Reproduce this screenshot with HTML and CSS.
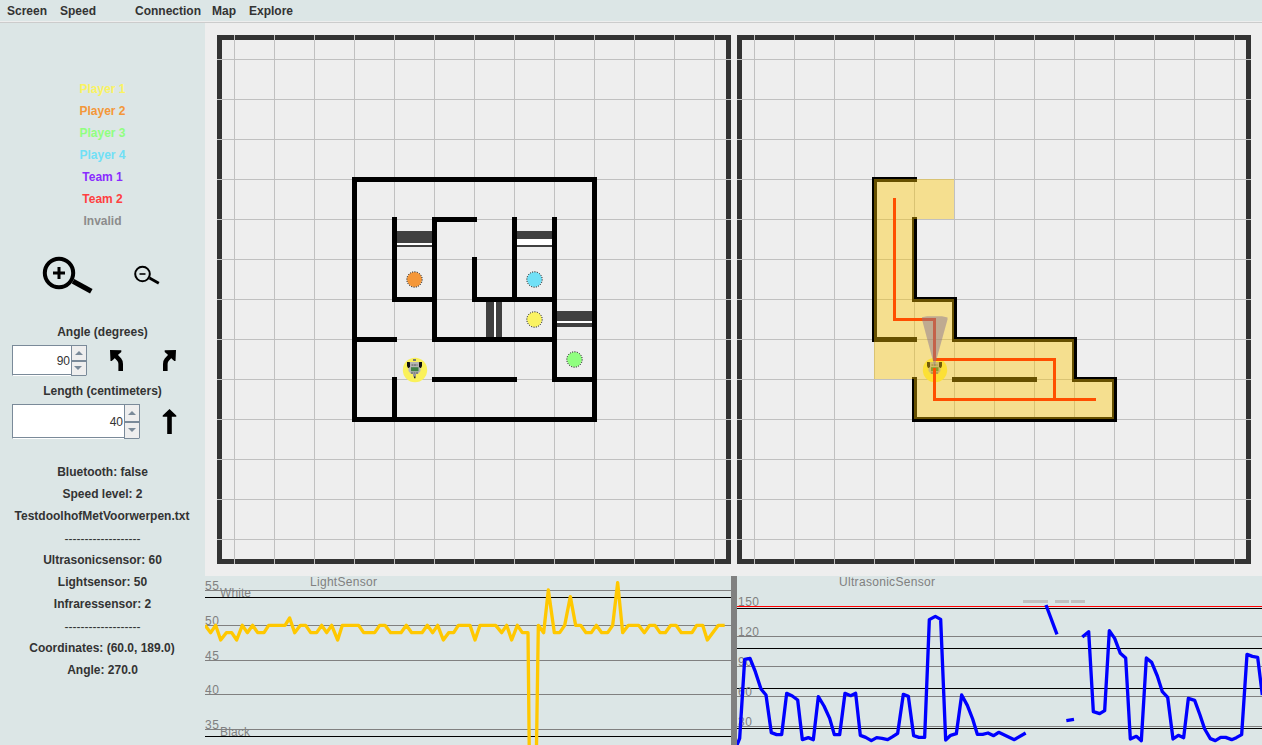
FILE: index.html
```html
<!DOCTYPE html>
<html lang="en">
<head>
<meta charset="utf-8">
<title>Robot control</title>
<link rel="stylesheet" href="styles.css">
</head>
<body>
<div class="app">
  <nav class="menubar">
    <span class="menu-screen">Screen</span><span class="menu-speed">Speed</span><span class="menu-connection">Connection</span><span class="menu-map">Map</span><span>Explore</span>
  </nav>
  <div class="content">
    <aside class="sidebar">
      <div class="legend">
        <div class="row player1">Player 1</div>
        <div class="row player2">Player 2</div>
        <div class="row player3">Player 3</div>
        <div class="row player4">Player 4</div>
        <div class="row team1">Team 1</div>
        <div class="row team2">Team 2</div>
        <div class="row invalid">Invalid</div>
      </div>
      <div class="zoom-row">
        <svg class="zoom-in" width="52" height="40" viewBox="42 256 52 40"><circle cx="59" cy="273" r="14.2" fill="none" stroke="#000" stroke-width="4"/><path d="M59 267v12M53 273h12" stroke="#000" stroke-width="3"/><path d="M73 281.300L91.300 291.300" stroke="#000" stroke-width="5.200"/></svg>
        <svg class="zoom-out" width="28" height="22" viewBox="133 264 28 22"><circle cx="142.5" cy="274" r="7.3" fill="none" stroke="#000" stroke-width="2"/><path d="M139.5 274h6" stroke="#000" stroke-width="1.6"/><path d="M149.5 278L158.8 283.2" stroke="#000" stroke-width="2.800"/></svg>
      </div>
      <div class="row">Angle (degrees)</div>
      <div class="control-row angle-row">
        <div class="spinner spinner-small"><span class="value">90</span><span class="buttons"><i class="up"></i><i class="down"></i></span></div>
        <svg class="turn-left" width="16" height="23" viewBox="109 349 16 23"><path d="M110 350l11.300.300v1.700l-2.600 2.300-5 5-2 1.700h-1.200z"/><path d="M114 354l5.300 5.800q1.400 1.700 1.400 4.200v7" fill="none" stroke="#000" stroke-width="4.600"/></svg>
        <svg class="turn-right" width="16" height="23" viewBox="162 349 16 23"><path d="M176 350l-11.300.300v1.700l2.600 2.300 5 5 2 1.700h1.200z"/><path d="M172 354l-5.300 5.800q-1.400 1.700-1.400 4.200v7" fill="none" stroke="#000" stroke-width="4.600"/></svg>
      </div>
      <div class="row">Length (centimeters)</div>
      <div class="control-row length-row">
        <div class="spinner spinner-large"><span class="value">40</span><span class="buttons"><i class="up"></i><i class="down"></i></span></div>
        <svg class="forward" width="16" height="27" viewBox="162 408 16 27"><path d="M169.500 409l6.800 6.400v1.300h-4.500V434h-4.600v-17.300h-4.500v-1.300z"/></svg>
      </div>
      <div class="status">
        <div class="row">Bluetooth: false</div>
        <div class="row">Speed level: 2</div>
        <div class="row file">TestdoolhofMetVoorwerpen.txt</div>
        <div class="row rule">-------------------</div>
        <div class="row">Ultrasonicsensor: 60</div>
        <div class="row">Lightsensor: 50</div>
        <div class="row">Infraressensor: 2</div>
        <div class="row rule">-------------------</div>
        <div class="row file">Coordinates: (60.0, 189.0)</div>
        <div class="row">Angle: 270.0</div>
      </div>
    </aside>
    <main class="main">
      <div class="maps">
        <svg class="map" width="514" height="529" viewBox="217 35 514 529">
          <defs>
            <path id="grid" d="M17.5 0v529M57.5 0v529M97.5 0v529M137.5 0v529M177.5 0v529M217.5 0v529M257.5 0v529M297.5 0v529M337.5 0v529M377.5 0v529M417.5 0v529M457.5 0v529M497.5 0v529M0 24.5h514M0 64.5h514M0 104.5h514M0 144.5h514M0 184.5h514M0 224.5h514M0 264.5h514M0 304.5h514M0 344.5h514M0 384.5h514M0 424.5h514M0 464.5h514M0 504.5h514"/>
            <g id="robot">
              <circle cx="60.500" cy="190.500" r="12.200" fill="#faf15a"/>
              <path d="M52.500 182.500h2.500l2 2v4h-3.500l-1-2zM67.500 182.500h-2.500l-2 2v4h3.500l1-2z" fill="#111"/>
              <path d="M58.500 179.500h3v2h-3z" fill="#777"/>
              <path d="M55.500 182.500h9v5l1.500 1v3l-2.500 3h-7l-2.500-3v-3l1.500-1z" fill="#b5b5b5"/>
              <path d="M57 185.500h6M56.500 193.500h7" stroke="#555" stroke-dasharray="2 .5"/>
              <path d="M56.500 187.700h7.500v4h-7.500z" fill="#3f8145"/>
              <path d="M58.500 194.500h3v2l-1 1.500h-1l-1-1.500z" fill="#999"/>
              <path d="M59.500 197h1.500v1.700h-1.500z" fill="#222"/>
            </g>
          </defs>
          <rect x="219.5" y="37.5" width="509" height="524" class="frame"/>
          <use href="#grid" x="217" y="35" class="grid"/>
          <g class="crisp">
            <path fill="#404040" d="M397 231h35v16h-35zM517 231h35v16h-35zM486 302h16v35h-16zM557 311h35v16h-35z"/>
            <path fill="#fff" d="M397 243h35v2h-35zM517 239h35v6h-35zM494 302h2v35h-2zM557 321h35v2h-35z"/>
          </g>
          <g transform="translate(354.5 179.5)">
            <path class="wall" d="M0 0H240V240H0zM40 40V120H80M120 40H80V160H200M120 80V120H200M160 40V120M200 40V200H240M0 160H40M80 200H160M40 200V240"/>
            <g><circle cx="60" cy="100" r="7.5" fill="#f49739"/><circle cx="180" cy="100" r="7.5" fill="#70e0f6"/><circle cx="180" cy="140" r="7.5" fill="#faf362"/><circle cx="220" cy="180" r="7.5" fill="#90ff80"/></g>
            <g class="item-ring"><circle cx="60" cy="100" r="7.700"/><circle cx="180" cy="100" r="7.700"/><circle cx="180" cy="140" r="7.700"/><circle cx="220" cy="180" r="7.700"/></g>
            <use href="#robot"/>
          </g>
        </svg>
        <svg class="map" width="514" height="529" viewBox="737 35 514 529">
          <rect x="739.5" y="37.5" width="509" height="524" class="frame"/>
          <use href="#grid" x="737" y="35" class="grid"/>
          <g transform="translate(874.5 179.5)">
            <path class="wall" d="M40 0H0V160H40M40 40V120H80V160H200V200H240V240H40V200M80 200H160"/>
            <use href="#robot"/>
            <path fill="#ffc800" fill-opacity=".4" d="M-.5-.5h80v40h-40v80h40v40h120v40h40v40h-200v-40h-40z"/>
            <path class="route" d="M20 18.5V140H60V180H180V220M60 188.5V220H221.5"/>
            <path d="M60 187L47.500 140v-2.200l5-1h15l5.500 1.200v2z" fill="#897693" fill-opacity=".5"/>
          </g>
        </svg>
      </div>
      <div class="charts">
        <svg width="526" height="169" viewBox="205 576 526 169">
          <g class="crisp"><path stroke="#808080" d="M205 590.5h526M205 625.5h526M205 660.5h526M205 694.5h526M205 729.5h526"/><path stroke="#000" d="M205 597.5h526M205 736.5h526"/></g>
          <g class="chart-text">
            <text x="310" y="586" textLength="67">LightSensor</text>
            <text x="205" y="590" textLength="14">55</text><text x="205" y="625" textLength="14">50</text><text x="205" y="660" textLength="14">45</text><text x="205" y="694" textLength="14">40</text><text x="205" y="729" textLength="14">35</text>
            <text x="220" y="597" textLength="31">White</text><text x="220" y="736" textLength="30">Black</text>
          </g>
          <g transform="translate(205 570) scale(.333333)">
            <polyline class="series light" points="0,166 17,188 32,166 47,210 64,188 80,188 95,210 112,166 127,188 143,166 158,188 177,188 191,166 240,166 254,144 269,188 286,166 302,166 317,188 335,188 350,166 365,188 380,166 398,210 412,166 461,166 476,188 509,188 524,166 540,166 557,188 588,188 604,166 620,188 651,188 667,166 683,188 698,166 715,210 731,188 746,188 760,166 795,166 810,210 825,166 872,166 890,188 905,166 920,210 937,166 952,188 969,188 973,560 994,560 1000,166 1016,188 1030,60 1048,188 1064,188 1079,166 1096,80 1112,166 1127,166 1143,188 1159,188 1174,166 1190,188 1208,188 1223,166 1238,38 1253,188 1270,166 1301,166 1318,188 1334,166 1350,166 1365,188 1381,188 1397,166 1413,166 1429,188 1461,188 1475,166 1493,166 1507,210 1540,166 1559,166"/>
          </g>
        </svg>
        <div class="divider"></div>
        <svg width="525" height="169" viewBox="737 576 525 169">
          <g class="crisp"><path stroke="#808080" d="M737 636.5h525M737 666.5h525M737 696.5h525M737 726.5h525"/><path stroke="#000" d="M737 608.5h525M737 648.5h525M737 688.5h525M737 728.5h525"/><path stroke="#f00" d="M737 606.5h525"/></g>
          <g class="chart-text">
            <text x="839" y="586" textLength="96">UltrasonicSensor</text>
            <text x="738" y="606" textLength="21">150</text><text x="738" y="636" textLength="21">120</text><text x="738" y="666" textLength="14">90</text><text x="738" y="696" textLength="14">60</text><text x="738" y="726" textLength="14">30</text>
          </g>
          <path class="crisp" fill="#c0c0c0" d="M1023 600h25v3h-25zM1055 600h14v3h-14zM1071 600h14v3h-14z"/>
          <g transform="translate(730 570) scale(.333333)">
            <polyline class="series ultra" points="21,525 29,505 44,268 60,265 76,305 93,357 108,375 124,488 140,494 155,494 170,370 187,378 203,390 217,509 235,503 250,509 265,380 282,408 299,445 313,494 329,494 345,370 362,377 377,370 391,496 407,502 424,512 440,503 456,505 473,509 488,500 503,490 520,373 535,379 551,497 567,502 584,502 598,149 616,139 632,148 647,510 662,496 679,491 695,375 712,406 728,447 742,493 758,493 774,489 791,497 806,487 853,509 887,489"/>
            <polyline class="series ultra" points="948,105 981,193"/>
            <polyline class="series ultra" points="1009,452 1032,448"/>
            <polyline class="series ultra" points="1057,201 1076,185 1090,425 1109,431 1124,422 1138,182 1154,205 1171,250 1187,264 1201,507 1219,499 1234,512 1249,264 1265,277 1282,318 1297,365 1313,382 1329,507 1345,496 1361,503 1375,385 1394,391 1410,435 1424,477 1441,506 1456,512 1472,502 1487,502 1505,509 1519,503 1535,494 1551,253 1567,259 1583,262 1597,375"/>
          </g>
        </svg>
      </div>
    </main>
  </div>
</div>
</body>
</html>
```
FILE: styles.css
```css
* { box-sizing: border-box; }
body { margin: 0; background: #eee; color: #333; font: bold 12px "Liberation Sans", Arial, sans-serif; overflow: hidden; }
svg { display: block; flex: none; }
.app { width: 1262px; height: 745px; display: flex; flex-direction: column; }
.menubar { height: 23px; flex: none; display: flex; padding-left: 7px; line-height: 22px; background: #dce6e6; border-bottom: 1px solid #ccc; box-shadow: inset 0 -1px #eee; }
.menu-screen { width: 53px; }
.menu-speed { width: 75px; }
.menu-connection { width: 77px; }
.menu-map { width: 37px; }
.content { flex: 1; display: flex; min-height: 0; }
.sidebar { width: 205px; flex: none; padding-top: 55px; background: #dce6e6; }
.row { height: 22px; line-height: 22px; text-align: center; white-space: nowrap; }
.rule { font-weight: normal; padding-top: 1px; }
.file { padding-right: 1px; }
.player1 { color: #faf362; }
.player2 { color: #f49739; }
.player3 { color: #90ff80; }
.player4 { color: #70e0f6; }
.team1 { color: #8a2bff; }
.team2 { color: #ff4040; }
.invalid { color: #8c8c8c; }
.zoom-row { height: 89px; display: flex; padding: 24px 0 0 42px; }
.zoom-out { margin: 8px 0 0 39px; }
.control-row { display: flex; padding-left: 12px; }
.angle-row { height: 37px; padding-top: 2px; }
.length-row { height: 59px; padding-top: 2px; }
.turn-left { margin: 4px 0 0 22px; }
.turn-right { margin: 4px 0 0 37px; }
.forward { margin: 4px 0 0 22px; }
.spinner { display: flex; border: 1px solid #7a8a99; border-bottom-color: #fff; background: #fff; font-weight: normal; }
.spinner-small { width: 75px; height: 31px; }
.spinner-large { width: 128px; height: 35px; }
.value { flex: 1; display: flex; align-items: center; justify-content: flex-end; padding: 2px 1px 0 0; border-bottom: 1px solid #7a8a99; }
.buttons { width: 15px; margin-bottom: -1px; display: flex; flex-direction: column; border-left: 1px solid #7a8a99; border-bottom: 1px solid #7a8a99; background: #eee; }
.buttons i { flex: 1; display: flex; align-items: center; justify-content: center; }
.buttons .up { border-bottom: 2px solid #7a8a99; }
.up::before, .down::before { content: ""; border: 4px solid transparent; }
.up::before { border-top: 0; border-bottom-color: #7a8a99; }
.down::before { border-bottom: 0; border-top-color: #7a8a99; margin-right: 2px; margin-bottom: 1px; }
.spinner-large .down::before { margin-right: 0; }
.main { flex: 1; display: flex; flex-direction: column; }
.maps { height: 553px; display: flex; gap: 6px; padding: 12px 0 0 12px; }
.charts { height: 169px; display: flex; background: #dce6e6; }
.divider { width: 6px; background: #808080; }
.frame { fill: none; stroke: #333; stroke-width: 5; }
.grid { stroke: #c0c0c0; shape-rendering: crispEdges; }
.crisp { shape-rendering: crispEdges; }
.wall { fill: none; stroke: #000; stroke-width: 5; stroke-linecap: square; shape-rendering: crispEdges; }
.item-ring { fill: none; stroke: #000; stroke-width: 1; stroke-dasharray: 1 1.4; }
.route { fill: none; stroke: #ff4f00; stroke-width: 3; shape-rendering: crispEdges; }
.chart-text { font-weight: normal; font-size: 12px; fill: #808080; }
.series { fill: none; stroke-width: 10; stroke-linejoin: round; }
.light { stroke: #ffc800; }
.ultra { stroke: #00f; }
```
